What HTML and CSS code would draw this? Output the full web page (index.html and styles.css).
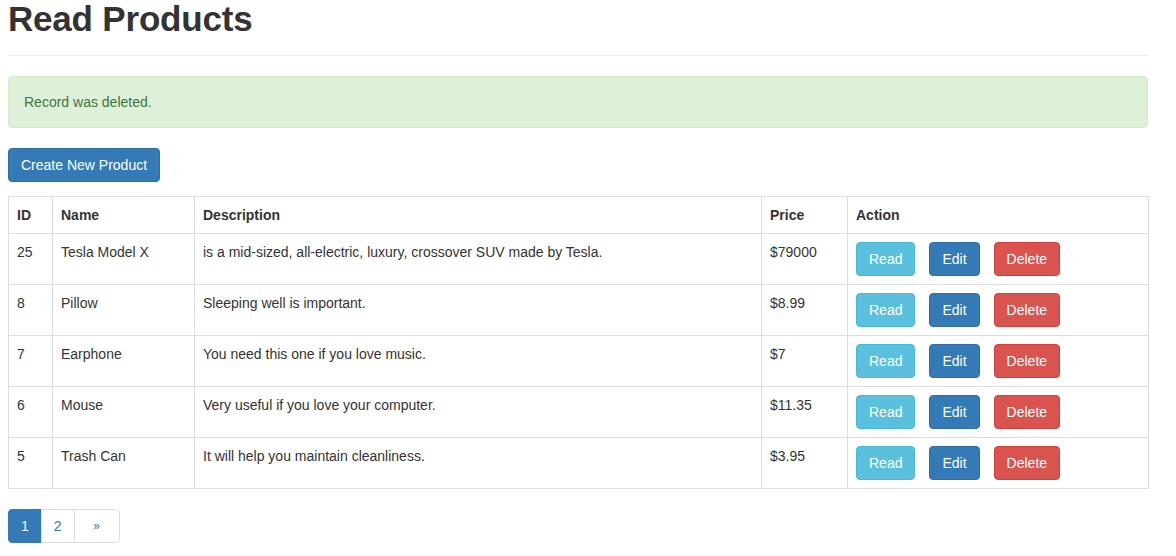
FILE: index.html
```html
<!DOCTYPE html>
<html>
<head>
<meta charset="utf-8">
<title>Read Products</title>
<link rel="stylesheet" href="styles.css">
</head>
<body>
<div class="container">
  <div class="page-header">
    <h1>Read Products</h1>
  </div>
  <div class="alert">Record was deleted.</div>
  <div class="toolbar">
    <a class="btn btn-primary" href="#">Create New Product</a>
  </div>
  <table class="table">
    <colgroup>
      <col class="c-id"><col class="c-name"><col class="c-desc"><col class="c-price"><col class="c-action">
    </colgroup>
    <thead>
      <tr><th>ID</th><th>Name</th><th>Description</th><th>Price</th><th>Action</th></tr>
    </thead>
    <tbody>
      <tr>
        <td>25</td><td>Tesla Model X</td><td>is a mid-sized, all-electric, luxury, crossover SUV made by Tesla.</td><td>$79000</td>
        <td><div class="actions"><a class="btn btn-info" href="#">Read</a><a class="btn btn-primary" href="#">Edit</a><a class="btn btn-danger" href="#">Delete</a></div></td>
      </tr>
      <tr>
        <td>8</td><td>Pillow</td><td>Sleeping well is important.</td><td>$8.99</td>
        <td><div class="actions"><a class="btn btn-info" href="#">Read</a><a class="btn btn-primary" href="#">Edit</a><a class="btn btn-danger" href="#">Delete</a></div></td>
      </tr>
      <tr>
        <td>7</td><td>Earphone</td><td>You need this one if you love music.</td><td>$7</td>
        <td><div class="actions"><a class="btn btn-info" href="#">Read</a><a class="btn btn-primary" href="#">Edit</a><a class="btn btn-danger" href="#">Delete</a></div></td>
      </tr>
      <tr>
        <td>6</td><td>Mouse</td><td>Very useful if you love your computer.</td><td>$11.35</td>
        <td><div class="actions"><a class="btn btn-info" href="#">Read</a><a class="btn btn-primary" href="#">Edit</a><a class="btn btn-danger" href="#">Delete</a></div></td>
      </tr>
      <tr>
        <td>5</td><td>Trash Can</td><td>It will help you maintain cleanliness.</td><td>$3.95</td>
        <td><div class="actions"><a class="btn btn-info" href="#">Read</a><a class="btn btn-primary" href="#">Edit</a><a class="btn btn-danger" href="#">Delete</a></div></td>
      </tr>
    </tbody>
  </table>
  <ul class="pagination">
    <li class="active"><a href="#">1</a></li>
    <li><a href="#">2</a></li>
    <li class="next"><a href="#">&raquo;</a></li>
  </ul>
</div>
</body>
</html>
```
FILE: styles.css
```css
* { box-sizing: border-box; }
html, body { margin: 0; padding: 0; background: #fff; }
body {
  font-family: "Liberation Sans", Arial, Helvetica, sans-serif;
  font-size: 14px;
  line-height: 20px;
  color: #333;
}
.container {
  width: 1140px;
  margin-left: 8px;
}
.page-header {
  padding-bottom: 17px;
  border-bottom: 1px solid #eee;
  margin-bottom: 20px;
}
.page-header h1 {
  margin: 0;
  font-size: 35px;
  line-height: 38px;
  font-weight: bold;
  color: #333;
  letter-spacing: -0.2px;
}
.alert {
  padding: 15px;
  border: 1px solid #d6e9c6;
  background: #dff0d8;
  color: #3c763d;
  border-radius: 4px;
  margin-bottom: 20px;
}
.toolbar {
  margin-bottom: 14px;
  display: flex;
}
.btn {
  display: inline-block;
  padding: 6px 12px;
  font-size: 14px;
  line-height: 20px;
  border: 1px solid transparent;
  border-radius: 4px;
  text-decoration: none;
  color: #fff;
  white-space: nowrap;
}
.btn-primary { background: #337ab7; border-color: #2e6da4; }
.btn-info { background: #5bc0de; border-color: #46b8da; }
.btn-danger { background: #d9534f; border-color: #d43f3a; }
.table {
  width: 1140px;
  border-collapse: collapse;
  table-layout: fixed;
  margin-bottom: 20px;
}
.c-id { width: 44px; }
.c-name { width: 142px; }
.c-desc { width: 567px; }
.c-price { width: 86px; }
.c-action { width: 301px; }
.table th, .table td {
  border: 1px solid #ddd;
  padding: 8px;
  text-align: left;
  vertical-align: top;
  line-height: 20px;
}
.table th { font-weight: bold; }
.actions {
  display: flex;
  gap: 14px;
}
.pagination {
  display: flex;
  list-style: none;
  margin: 0;
  padding: 0;
}
.pagination li a {
  display: block;
  padding: 6px 12px;
  line-height: 20px;
  color: #337ab7;
  text-decoration: none;
  border: 1px solid #ddd;
  margin-left: -1px;
  background: #fff;
}
.pagination li:first-child a {
  margin-left: 0;
  border-top-left-radius: 4px;
  border-bottom-left-radius: 4px;
}
.pagination li:last-child a {
  border-top-right-radius: 4px;
  border-bottom-right-radius: 4px;
}
.pagination li.active a {
  background: #337ab7;
  border-color: #337ab7;
  color: #fff;
}
.pagination li.next a {
  padding: 6px 18px;
  font-size: 12px;
  width: 46px;
  text-align: center;
}
```
